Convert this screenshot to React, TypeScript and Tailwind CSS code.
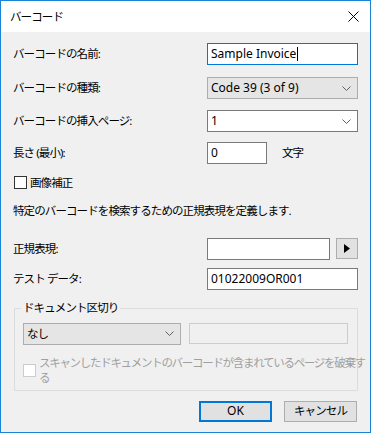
import React from "react";

const font = "font-['Noto_Sans','Noto_Sans_CJK_JP',sans-serif]";
// Japanese text: narrower, like Meiryo UI
const jp = "text-[11.5px] tracking-[-0.9px]";

const Chevron = ({ color = "#606060" }: { color?: string }) => (
  <svg width="9" height="5" viewBox="0 0 9 5" className="shrink-0">
    <polyline points="0.5,0.5 4.5,4.5 8.5,0.5" fill="none" stroke={color} strokeWidth="1" />
  </svg>
);

const Row = ({ label, children, className = "" }: { label: string; children: React.ReactNode; className?: string }) => (
  <div className={`flex items-center ${className}`}>
    <div className={`w-[194px] leading-none text-black ${jp}`}>{label}</div>
    {children}
  </div>
);

const TextBox = ({ value, className = "", focused = false }: { value?: string; className?: string; focused?: boolean }) => (
  <div
    className={`h-[22px] bg-white border flex items-center pl-[3px] text-[12px] text-black ${
      focused ? "border-[#0078d7]" : "border-[#7a7a7a]"
    } ${className}`}
  >
    {value}
    {focused && <span className="ml-[1px] w-px h-[14px] bg-black" />}
  </div>
);

const Combo = ({ value, grey = false, className = "", textClass = "text-[12px]" }: { value: string; grey?: boolean; className?: string; textClass?: string }) => (
  <div
    className={`h-[22px] border flex items-center justify-between pl-[3px] pr-[6px] text-black ${
      grey ? "bg-[#e5e5e5] border-[#adadad]" : "bg-white border-[#7a7a7a]"
    } ${className}`}
  >
    <span className={textClass}>{value}</span>
    <Chevron />
  </div>
);

export default function App() {
  return (
    <div className={`w-[373px] h-[435px] bg-white ${font}`}>
      <div className="w-[371px] h-[433px] border border-[#1883d7] bg-[#f0f0f0] flex flex-col">
        {/* title bar */}
        <div className="h-[31px] bg-white flex items-center justify-between pl-[9px] pr-[11px]">
          <span className={`text-black ${jp}`}>バーコード</span>
          <svg width="11" height="11" viewBox="0 0 11 11">
            <line x1="0.5" y1="0.5" x2="10.5" y2="10.5" stroke="#000" strokeWidth="1" />
            <line x1="10.5" y1="0.5" x2="0.5" y2="10.5" stroke="#000" strokeWidth="1" />
          </svg>
        </div>

        <div className="flex flex-col pl-[12px] pr-[12px]">
          <Row label="バーコードの名前:" className="mt-[11px]">
            <TextBox value="Sample Invoice" focused className="w-[151px]" />
          </Row>
          <Row label="バーコードの種類:" className="mt-[12px]">
            <Combo value="Code 39 (3 of 9)" grey className="w-[151px]" />
          </Row>
          <Row label="バーコードの挿入ページ:" className="mt-[11px]">
            <Combo value="1" className="w-[151px]" />
          </Row>
          <Row label="長さ (最小):" className="mt-[10px]">
            <TextBox value="0" className="w-[60px]" />
            <span className={`ml-[15px] text-black ${jp}`}>文字</span>
          </Row>

          <div className="mt-[12px] flex items-center">
            <div className="ml-[1px] w-[13px] h-[13px] border border-[#333] bg-white" />
            <span className={`ml-[3px] leading-none text-black ${jp}`}>画像補正</span>
          </div>

          <div className={`mt-[16px] leading-none text-black whitespace-nowrap ${jp}`}>
            特定のバーコードを検索するための正規表現を定義します.
          </div>

          <Row label="正規表現:" className="mt-[21px]">
            <TextBox className="w-[123px]" />
            <div className="ml-[6px] w-[22px] h-[21px] bg-[#e1e1e1] border border-[#adadad] flex items-center justify-center">
              <svg width="6" height="9" viewBox="0 0 6 9">
                <polygon points="0,0 6,4.5 0,9" fill="#000" />
              </svg>
            </div>
          </Row>
          <Row label="テスト データ:" className="mt-[8px]">
            <TextBox value="01022009OR001" className="w-[151px]" />
          </Row>

          {/* group box */}
          <div className="relative mt-[18px] ml-[1px] w-[344px] h-[83px] border border-[#dcdcdc] rounded-[1px]">
            <span className={`absolute -top-[9px] left-[6px] px-[2px] bg-[#f0f0f0] leading-[16px] text-black ${jp}`}>
              ドキュメント区切り
            </span>
            <div className="flex mt-[14px] ml-[8px]">
              <Combo value="なし" grey textClass={jp} className="w-[158px] h-[21px]" />
              <div className="ml-[8px] w-[159px] h-[21px] border border-[#cccccc] bg-[#f0f0f0]" />
            </div>
            <div className="flex mt-[10px] ml-[8px]">
              <div className="mt-[9px] w-[13px] h-[13px] border border-[#cccccc] bg-white shrink-0" />
              <div className="ml-[3px] leading-[15px] text-[#a0a0a0] whitespace-nowrap text-[11.5px] tracking-[-1.3px]">
                スキャンしたドキュメントのバーコードが含まれているページを破棄す
                <br />る
              </div>
            </div>
          </div>

          <div className="mt-[10px] flex justify-end pr-[1px]">
            <div className="w-[73px] h-[21px] border-2 border-[#0078d7] bg-[#e1e1e1] flex items-center justify-center text-[12px] text-black">
              OK
            </div>
            <div className={`ml-[12px] w-[73px] h-[21px] border border-[#adadad] bg-[#e1e1e1] flex items-center justify-center text-black ${jp}`}>
              キャンセル
            </div>
          </div>
        </div>
      </div>
    </div>
  );
}
